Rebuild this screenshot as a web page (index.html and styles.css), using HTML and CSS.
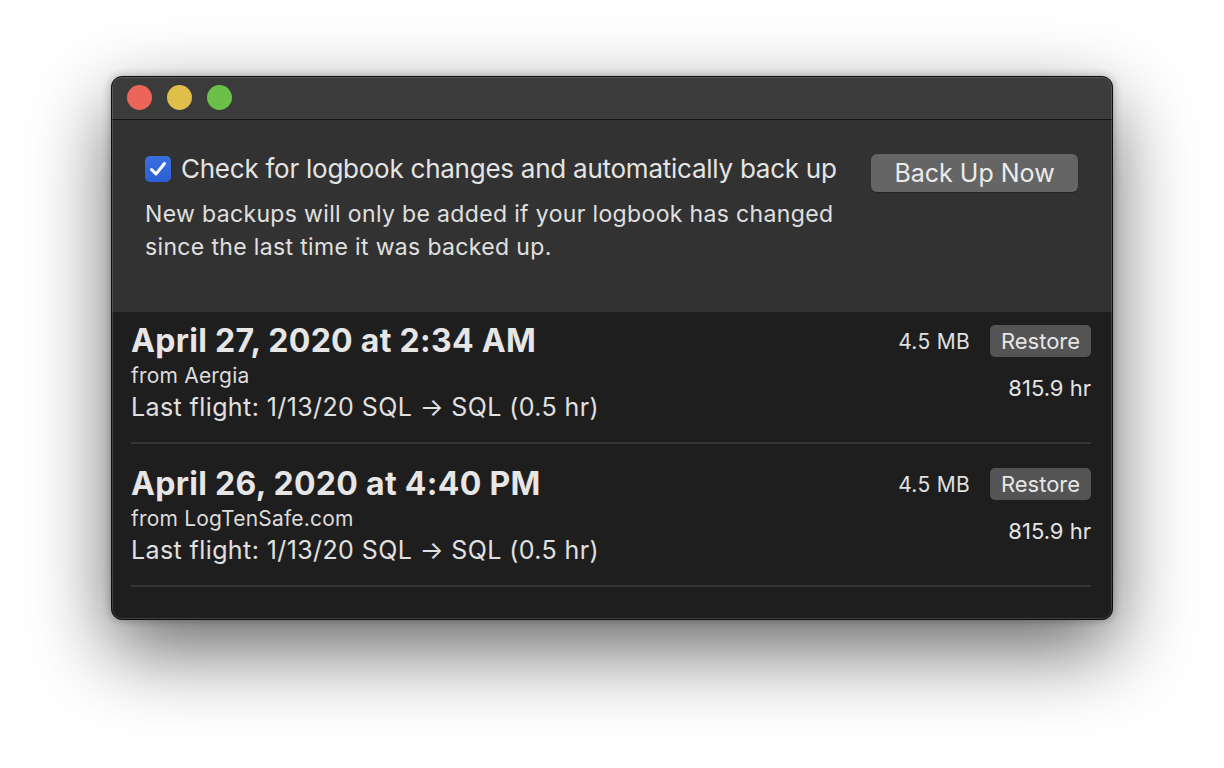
FILE: index.html
```html
<!DOCTYPE html>
<html>
<head>
<meta charset="utf-8">
<link rel="stylesheet" href="styles.css">
</head>
<body>
<div class="window">
  <div class="titlebar">
    <span class="light red"></span>
    <span class="light yellow"></span>
    <span class="light green"></span>
  </div>
  <div class="panel">
    <div class="panel-text">
      <label class="check-row">
        <span class="checkbox">
          <svg width="18" height="16" viewBox="0 0 18 16"><path d="M2.5 8.5 L7 13 L15.5 2.5" fill="none" stroke="#fff" stroke-width="3" stroke-linecap="round" stroke-linejoin="round"/></svg>
        </span>
        <span class="check-label">Check for logbook changes and automatically back up</span>
      </label>
      <p class="desc">New backups will only be added if your logbook has changed<br>since the last time it was backed up.</p>
    </div>
    <button class="btn-big">Back Up Now</button>
  </div>
  <div class="list">
    <div class="row">
      <div class="row-main">
        <div class="title">April 27, 2020 at 2:34 AM</div>
        <div class="source">from Aergia</div>
        <div class="flight">Last flight: 1/13/20 SQL → SQL (0.5 hr)</div>
      </div>
      <div class="row-side">
        <div class="side-top">
          <span class="size">4.5 MB</span>
          <button class="btn-small">Restore</button>
        </div>
        <div class="hours">815.9 hr</div>
      </div>
    </div>
    <div class="row">
      <div class="row-main">
        <div class="title">April 26, 2020 at 4:40 PM</div>
        <div class="source">from LogTenSafe.com</div>
        <div class="flight">Last flight: 1/13/20 SQL → SQL (0.5 hr)</div>
      </div>
      <div class="row-side">
        <div class="side-top">
          <span class="size">4.5 MB</span>
          <button class="btn-small">Restore</button>
        </div>
        <div class="hours">815.9 hr</div>
      </div>
    </div>
  </div>
</div>
</body>
</html>
```
FILE: styles.css
```css
* { box-sizing: border-box; }
html, body { margin: 0; padding: 0; }
body {
  background: #ffffff;
  width: 1224px;
  height: 768px;
  overflow: hidden;
  font-family: Inter, "Noto Sans", sans-serif;
  color: #e2e2e2;
}
.window {
  position: relative;
  width: 1002px;
  height: 544px;
  margin: 76px 0 0 111px;
  border: 1px solid #0c0c0c;
  border-radius: 11px;
  overflow: hidden;
  background: #1e1e1e;
  box-shadow: 0 30px 80px rgba(0,0,0,0.6), 0 0 8px rgba(0,0,0,0.3);
}
.window::after {
  content: "";
  position: absolute;
  inset: 0;
  border: 1px solid rgba(255,255,255,0.16);
  border-radius: 10px;
  pointer-events: none;
}
.titlebar {
  height: 43px;
  background: #3b3b3b;
  border-bottom: 1px solid #141414;
  display: flex;
  align-items: center;
  padding-left: 15px;
  gap: 15px;
}
.light {
  width: 25px;
  height: 25px;
  border-radius: 50%;
  margin-top: -1px;
}
.red { background: #ec6559; }
.yellow { background: #e0be4a; }
.green { background: #6cc04a; }
.panel {
  height: 192px;
  background: #323232;
  padding: 34px 34px 0 33px;
  display: flex;
  justify-content: space-between;
  align-items: flex-start;
}
.check-row {
  display: flex;
  align-items: center;
  gap: 10px;
  margin-top: 2px;
  height: 26px;
}
.checkbox {
  width: 26px;
  height: 26px;
  border-radius: 5px;
  background: linear-gradient(#3a6fe0, #2b5fd3);
  display: flex;
  align-items: center;
  justify-content: center;
}
.check-label {
  font-size: 26px;
  line-height: 26px;
  letter-spacing: -0.25px;
  color: #e4e4e4;
}
.desc {
  margin: 16px 0 0 0;
  font-size: 23px;
  line-height: 33px;
  letter-spacing: 0.35px;
  color: #e0e0e0;
}
.btn-big {
  font-family: inherit;
  width: 207px;
  height: 38px;
  border: none;
  border-radius: 6px;
  background: #656565;
  color: #ebebeb;
  font-size: 25px;
  padding: 0;
  box-shadow: 0 1px 1px rgba(0,0,0,0.25);
}
.list {
  background: #1e1e1e;
  padding: 0 21px 0 19px;
}
.row {
  display: flex;
  justify-content: space-between;
  padding: 21px 0 20px 0;
  border-bottom: 2px solid #353535;
}
.row:first-child { padding-top: 10px; }
.title {
  font-size: 32px;
  line-height: 38px;
  font-weight: 700;
  letter-spacing: 0.3px;
  color: #e6e6e6;
}
.source {
  margin-top: 4px;
  font-size: 21px;
  line-height: 24px;
  letter-spacing: 0.2px;
  color: #dcdcdc;
}
.flight {
  margin-top: 4px;
  font-size: 25px;
  line-height: 30px;
  letter-spacing: 0.4px;
  color: #e0e0e0;
}
.row-side {
  display: flex;
  flex-direction: column;
  align-items: flex-end;
}
.side-top {
  display: flex;
  align-items: center;
  gap: 20px;
  margin-top: 3px;
}
.size {
  font-size: 21px;
  letter-spacing: 0.3px;
  color: #e0e0e0;
}
.btn-small {
  font-family: inherit;
  width: 101px;
  height: 32px;
  border: none;
  border-radius: 5px;
  background: #545454;
  color: #e6e6e6;
  font-size: 22px;
  padding: 0;
}
.hours {
  margin-top: 17px;
  font-size: 22px;
  line-height: 28px;
  color: #e4e4e4;
}
```
